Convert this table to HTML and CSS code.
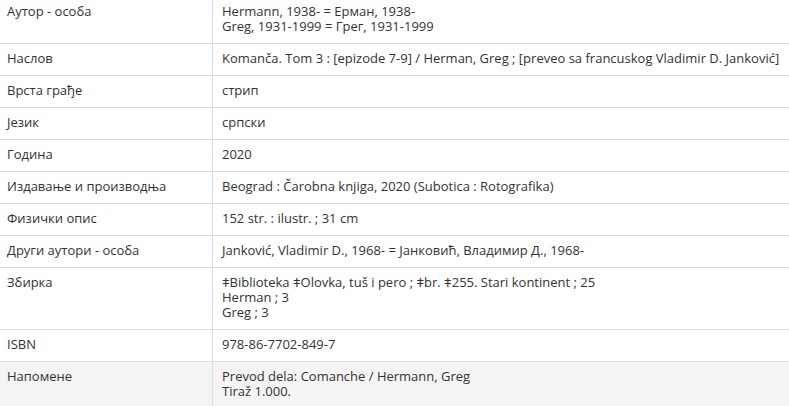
FILE: index.html
```html
<!DOCTYPE html>
<html lang="sr">

<head>
    <meta charset="UTF-8">
    <meta name="viewport" content="width=device-width, initial-scale=1.0">
    <title>Запис</title>
    <link rel="stylesheet" href="styles.css">
</head>

<body>
    <main class="record">
        <table class="record-table">
            <tbody>
                <tr>
                    <td class="label">Аутор - особа</td>
                    <td class="value">Hermann, 1938- = Ерман, 1938-<br>Greg, 1931-1999 = Грег, 1931-1999</td>
                </tr>
                <tr>
                    <td class="label">Наслов</td>
                    <td class="value">Komanča. Tom 3 : [epizode 7-9] / Herman, Greg ; [preveo sa francuskog Vladimir D. Janković]</td>
                </tr>
                <tr>
                    <td class="label">Врста грађе</td>
                    <td class="value">стрип</td>
                </tr>
                <tr>
                    <td class="label">Језик</td>
                    <td class="value">српски</td>
                </tr>
                <tr>
                    <td class="label">Година</td>
                    <td class="value">2020</td>
                </tr>
                <tr>
                    <td class="label">Издавање и производња</td>
                    <td class="value">Beograd : Čarobna knjiga, 2020 (Subotica : Rotografika)</td>
                </tr>
                <tr>
                    <td class="label">Физички опис</td>
                    <td class="value">152 str. : ilustr. ; 31 cm</td>
                </tr>
                <tr>
                    <td class="label">Други аутори - особа</td>
                    <td class="value">Janković, Vladimir D., 1968- = Јанковић, Владимир Д., 1968-</td>
                </tr>
                <tr>
                    <td class="label">Збирка</td>
                    <td class="value">ǂBiblioteka ǂOlovka, tuš i pero ; ǂbr. ǂ255. Stari kontinent ; 25<br>Herman ; 3<br>Greg ; 3</td>
                </tr>
                <tr>
                    <td class="label">ISBN</td>
                    <td class="value">978-86-7702-849-7</td>
                </tr>
                <tr class="shaded">
                    <td class="label">Напомене</td>
                    <td class="value">Prevod dela: Comanche / Hermann, Greg<br>Tiraž 1.000.</td>
                </tr>
            </tbody>
        </table>
    </main>
</body>

</html>
```

FILE: styles.css
```css
body {
    margin: 0;
    background-color: white;
    font-family: "Open Sans", "Liberation Sans", sans-serif;
    font-size: 13px;
    line-height: 15px;
    color: #333;
}

.record {
    margin-top: -4px;
}

.record-table {
    width: 100%;
    border-collapse: collapse;
}

.record-table td {
    padding: 7px 8px 9px;
    vertical-align: top;
    border-top: 1px solid #ddd;
}

.label {
    width: 197px;
    padding-left: 7px !important;
    border-right: 1px solid #ddd;
}

.value {
    padding-left: 9px !important;
}

.shaded td {
    background-color: #f4f4f4;
}
```
